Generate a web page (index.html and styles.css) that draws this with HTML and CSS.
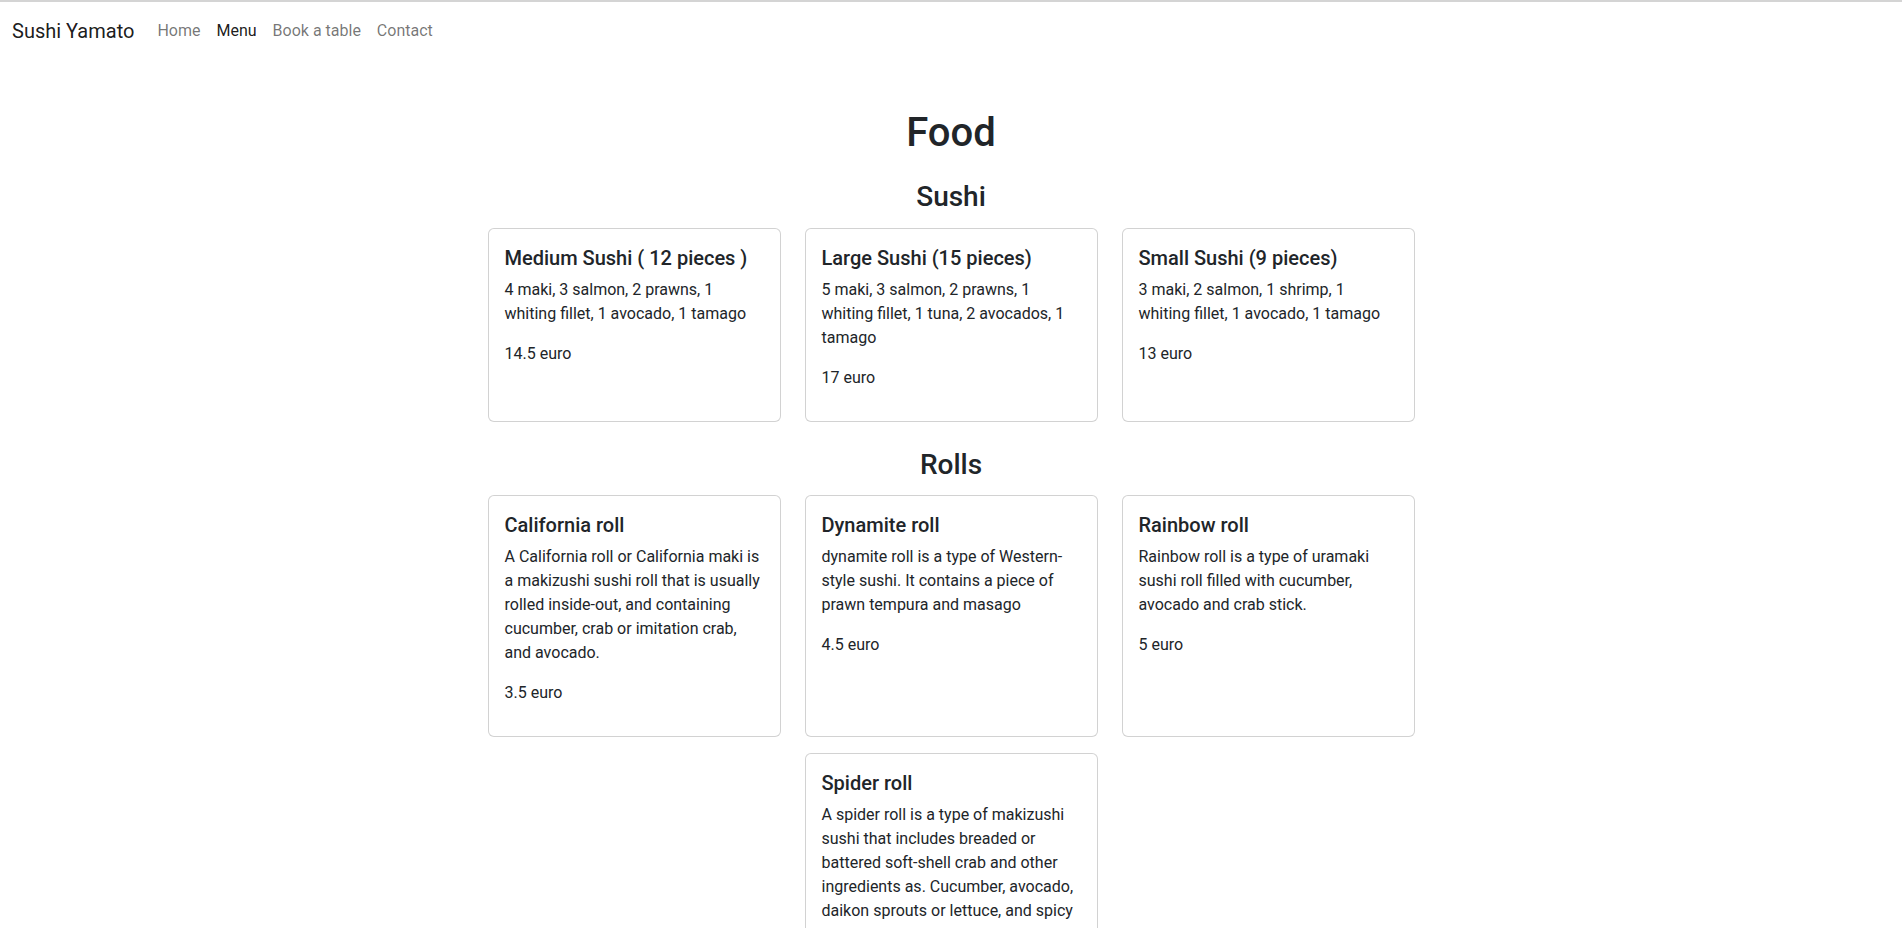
FILE: index.html
```html
<!DOCTYPE html>
<html lang="en">
<head>
<meta charset="utf-8">
<title>Sushi Yamato - Menu</title>
<link rel="stylesheet" href="styles.css">
</head>
<body>
<nav class="navbar">
  <a class="brand" href="#">Sushi Yamato</a>
  <ul class="nav">
    <li><a class="nav-link" href="#">Home</a></li>
    <li><a class="nav-link active" href="#">Menu</a></li>
    <li><a class="nav-link" href="#">Book a table</a></li>
    <li><a class="nav-link" href="#">Contact</a></li>
  </ul>
</nav>
<main class="menu">
  <h1 class="page-title">Food</h1>
  <section class="category">
    <h3 class="category-title">Sushi</h3>
    <div class="card-grid">
      <div class="card">
        <h5 class="card-title">Medium Sushi ( 12 pieces )</h5>
        <p class="card-text">4 maki, 3 salmon, 2 prawns, 1 whiting fillet, 1 avocado, 1 tamago</p>
        <p class="card-price">14.5 euro</p>
      </div>
      <div class="card">
        <h5 class="card-title">Large Sushi (15 pieces)</h5>
        <p class="card-text">5 maki, 3 salmon, 2 prawns, 1 whiting fillet, 1 tuna, 2 avocados, 1 tamago</p>
        <p class="card-price">17 euro</p>
      </div>
      <div class="card">
        <h5 class="card-title">Small Sushi (9 pieces)</h5>
        <p class="card-text">3 maki, 2 salmon, 1 shrimp, 1 whiting fillet, 1 avocado, 1 tamago</p>
        <p class="card-price">13 euro</p>
      </div>
    </div>
  </section>
  <section class="category">
    <h3 class="category-title">Rolls</h3>
    <div class="card-grid">
      <div class="card">
        <h5 class="card-title">California roll</h5>
        <p class="card-text">A California roll or California maki is a makizushi sushi roll that is usually rolled inside-out, and containing cucumber, crab or imitation crab, and avocado.</p>
        <p class="card-price">3.5 euro</p>
      </div>
      <div class="card">
        <h5 class="card-title">Dynamite roll</h5>
        <p class="card-text">dynamite roll is a type of Western-style sushi. It contains a piece of prawn tempura and masago</p>
        <p class="card-price">4.5 euro</p>
      </div>
      <div class="card">
        <h5 class="card-title">Rainbow roll</h5>
        <p class="card-text">Rainbow roll is a type of uramaki sushi roll filled with cucumber, avocado and crab stick.</p>
        <p class="card-price">5 euro</p>
      </div>
      <div class="card">
        <h5 class="card-title">Spider roll</h5>
        <p class="card-text">A spider roll is a type of makizushi sushi that includes breaded or battered soft-shell crab and other ingredients as. Cucumber, avocado, daikon sprouts or lettuce, and spicy mayonnaise.</p>
        <p class="card-price">6 euro</p>
      </div>
    </div>
  </section>
</main>
</body>
</html>
```
FILE: styles.css
```css
* { box-sizing: border-box; }

html, body { margin: 0; padding: 0; }

body {
  font-family: Roboto, "Liberation Sans", Arial, sans-serif;
  font-size: 16px;
  line-height: 1.5;
  color: #212529;
  background: #fff;
  border-top: 2px solid #d4d4d4;
}

/* Navbar */
.navbar {
  display: flex;
  align-items: center;
  padding: 9px 12px 7px;
  height: 56px;
}

.brand {
  font-size: 20px;
  line-height: 30px;
  padding: 5px 0;
  margin-right: 15px;
  color: rgba(0, 0, 0, 0.9);
  text-decoration: none;
}

.nav {
  display: flex;
  list-style: none;
  margin: 0;
  padding: 0;
}

.nav-link {
  display: block;
  padding: 8px;
  color: rgba(0, 0, 0, 0.55);
  text-decoration: none;
}

.nav-link.active { color: rgba(0, 0, 0, 0.9); }

/* Menu */
.menu {
  display: flex;
  flex-direction: column;
  align-items: center;
  text-align: center;
}

.page-title {
  font-size: 40px;
  font-weight: 500;
  line-height: 1.2;
  margin: 51px 0 14px;
}

.category {
  display: flex;
  flex-direction: column;
  align-items: center;
  width: 927px;
}

.category-title {
  font-size: 28px;
  font-weight: 500;
  line-height: 1.2;
  margin: 9px 0 14px;
}

.card-grid {
  display: flex;
  flex-wrap: wrap;
  justify-content: center;
  column-gap: 24px;
  row-gap: 16px;
  width: 100%;
  margin-bottom: 17px;
  text-align: left;
}

.card {
  width: 293px;
  border: 1px solid rgba(0, 0, 0, 0.175);
  border-radius: 6px;
  padding: 17px 16px 15px;
  background: #fff;
}

.card-title {
  font-size: 20px;
  font-weight: 500;
  line-height: 1.2;
  margin: 0 0 8px;
}

.card-text,
.card-price {
  margin: 0 0 16px;
}
```
